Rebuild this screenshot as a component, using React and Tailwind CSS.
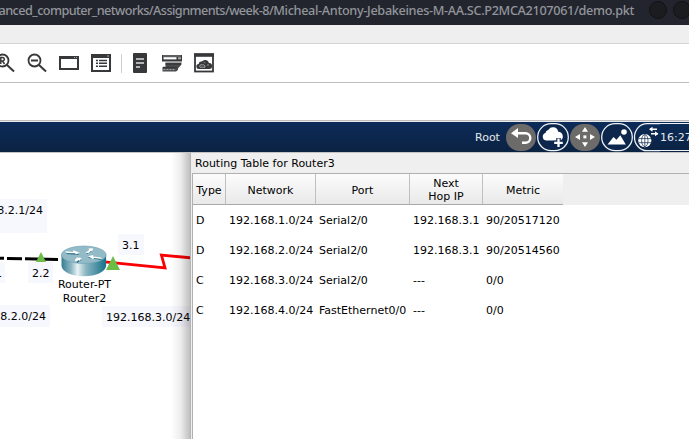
import React from "react";

const routes = [
  ["D", "192.168.1.0/24", "Serial2/0", "192.168.3.1", "90/20517120"],
  ["D", "192.168.2.0/24", "Serial2/0", "192.168.3.1", "90/20514560"],
  ["C", "192.168.3.0/24", "Serial2/0", "---", "0/0"],
  ["C", "192.168.4.0/24", "FastEthernet0/0", "---", "0/0"],
];

function TitleBar() {
  return (
    <div className="flex h-[25px] shrink-0 bg-[#23252e] text-[#92959b]">
      <div className="flex h-[20px] w-[634px] shrink-0 justify-end whitespace-nowrap font-['Noto_Sans',sans-serif] text-[12.7px] leading-[20px] font-medium tracking-[-0.34px]">
        <span className="tracking-[-0.58px]">anced_computer_networks/Assignments/week-8/</span>
        <span>Micheal-Antony-Jebakeines-M-AA.SC.P2MCA2107061/demo.pkt</span>
      </div>
      <div className="flex shrink-0 gap-[6px] pt-px pl-[15px]">
        <span className="h-[18px] w-[18px] rounded-full border border-[#121317] bg-[#1b1c20]" />
        <span className="h-[18px] w-[18px] rounded-full border border-[#121317] bg-[#1b1c20]" />
      </div>
    </div>
  );
}

function ToolBar() {
  return (
    <div className="h-[39px] shrink-0 border-b border-[#bdbdbd] bg-white">
      <svg width="689" height="38" viewBox="0 44 689 38" fill="none" stroke="#37383a">
        <circle cx="2.5" cy="60.5" r="6" strokeWidth="1.8" />
        <path d="M7 65l7 6.5" strokeWidth="2" />
        <path d="M.8 64v-6.5h1.7a1.8 1.8 0 010 3.6H.8M2.5 61l2 3" strokeWidth="1.5" />
        <circle cx="34.5" cy="60.5" r="6" strokeWidth="1.8" />
        <path d="M39 65l7 6.5" strokeWidth="2" />
        <path d="M31 60.5h7" strokeWidth="2" />
        <rect x="60" y="58" width="18" height="11" strokeWidth="2" />
        <path d="M59 57.5h20" strokeWidth="3" />
        <path d="M74 57.5h1M76 57.5h1" stroke="#aaa" strokeWidth="1" />
        <rect x="92" y="55" width="18" height="16" strokeWidth="2" />
        <path d="M91 56h20" strokeWidth="4" />
        <path d="M107 56h2" stroke="#aaa" strokeWidth="1" />
        <path d="M96 60.5h2M99 60.5h8M96 63.2h2M99 63.2h8M96 66.2h2M99 66.2h8" strokeWidth="1.6" />
        <path d="M121.5 54v19" stroke="#d0d0d0" />
        <rect x="133" y="53" width="14" height="20" rx="1" fill="#37383a" stroke="none" />
        <path d="M136 59h8M136 63h8M136 67h4" stroke="#ddd" strokeWidth="1.3" />
        <rect x="162" y="55" width="20" height="6.5" fill="#37383a" stroke="none" />
        <path d="M163.5 58.3h13" stroke="#fff" strokeWidth="2.2" />
        <path d="M178 58.3h3" stroke="#aaa" strokeWidth="2" />
        <path d="M163 56h18" stroke="#aaa" strokeWidth=".7" />
        <path d="M165.5 62.5h16v2l-3.5 4v1.5l-2 1.5h-13.5v-4.5h3z" fill="#4a4b4e" stroke="none" />
        <path d="M165.5 64h15.5M163 67.5h14" strokeWidth="1.6" />
        <path d="M163.5 69.6h12" stroke="#aaa" strokeDasharray="2 1" />
        <rect x="195" y="54.5" width="18" height="17" strokeWidth="1.8" />
        <path d="M194 55h20" strokeWidth="3.6" />
        <path d="M199 69a2.5 2.5 0 01-.3-5 2.8 2.8 0 013.2-2.4 4 4 0 017.1 1.4 3 3 0 01.2 6z" fill="#37383a" stroke="none" />
        <path d="M200 67.2a1.5 1.5 0 012-2.2 2 2 0 013 2.2zM204 62.2l1 1M207 65h2" stroke="#bbb" strokeWidth=".8" />
      </svg>
    </div>
  );
}

function NavBar() {
  return (
    <div className="relative flex h-[30px] shrink-0 bg-linear-to-b from-[#0c2b59] to-[#0b2342] text-[11px] leading-[31px] text-[#e4e8ee]">
      <span className="ml-[475px] w-[31px] shrink-0">Root</span>
      <svg className="shrink-0" width="154" height="30" viewBox="506 122 154 30" fill="none">
        <rect x="506" y="124" width="30" height="27" rx="13.5" fill="#6c6b69" />
        <path d="M517 133.2h8.5a4.6 4.6 0 010 9.6h-3.5" stroke="#fff" strokeWidth="2.4" />
        <path d="M511 133.2l7-5.2v10z" fill="#fff" />
        <rect x="537.7" y="123.7" width="30.6" height="27" rx="13.4" fill="#0c264c" stroke="#eef1f5" strokeWidth="1.3" />
        <path d="M546 140.5a3.8 3.8 0 01-.5-7.4 3.8 3.8 0 013-3.4 5.3 5.3 0 019.7 2 4.7 4.7 0 012.2 8.8z" fill="#fff" />
        <path d="M558.5 138v10M553.5 143h10" stroke="#0c264c" strokeWidth="4.5" />
        <path d="M558.5 138.5v8.5M554.2 142.8h8.6" stroke="#fff" strokeWidth="2.3" />
        <rect x="570" y="124" width="30" height="27" rx="13.5" fill="#6c6b69" />
        <path d="M585 127l3 4.8h-6zM585 147l3-4.8h-6zM575 137l5-3v6zM595 137l-5-3v6z" fill="#fff" />
        <rect x="583.4" y="135.4" width="3" height="3" fill="#fff" />
        <rect x="601.7" y="123.7" width="30.6" height="27" rx="13.4" fill="#0c264c" stroke="#eef1f5" strokeWidth="1.3" />
        <path d="M607.5 144.5l6-7.5 3 2.7 3.8-4.5 5.5 9.3z" fill="#fff" />
        <circle cx="624" cy="132" r="2.8" fill="#fff" />
        <path d="M660 123.7h-13a12.5 13.5 0 000 27h13" stroke="#eef1f5" strokeWidth="1.3" />
        <circle cx="644.8" cy="140.6" r="6.6" fill="#fff" />
        <path d="M644.8 134.5v12.4M639 138.6h12M639 142.7h12" stroke="#0c264c" strokeWidth=".7" />
        <ellipse cx="644.8" cy="140.6" rx="3.2" ry="6" stroke="#0c264c" strokeWidth=".7" />
        <path d="M650 129.2h7M651 133.8h7" stroke="#fff" strokeWidth="1.6" />
        <path d="M652.5 126.7v5l-3.5-2.5zM655 131.3v5l3.4-2.5z" fill="#fff" />
      </svg>
      <span className="h-[29px] grow overflow-hidden border-b border-[#eef1f5] whitespace-nowrap">16:27:00</span>
      <div className="absolute top-px left-[660px] h-px w-[29px] bg-[#eef1f5]" />
    </div>
  );
}

const label = "absolute whitespace-nowrap bg-[#f7f7fe]";

function Topology() {
  return (
    <div className="relative w-[190px] shrink-0 overflow-hidden border-t border-[#c4c4c4] bg-white text-[11px] leading-[13px]">
      <div className="absolute -top-px left-0 h-[290px] w-[190px]">
        <div className={`${label} top-[47px] left-0 h-[34px] w-[47px]`} />
        <div className="absolute top-[52px] right-[147px] whitespace-nowrap">192.168.2.1/24</div>
        <div className={`${label} top-[82px] left-[118px] h-[21px] w-[26px] pt-[5px] pl-[4px]`}>3.1</div>
        <div className={`${label} top-[110px] left-0 h-[21px] w-[5px]`} />
        <div className="absolute top-[115px] right-[188px]">2.1</div>
        <div className={`${label} top-[110px] left-[28px] h-[21px] w-[25px] pt-[5px] pl-[4px]`}>2.2</div>
        <div className={`${label} top-[153px] left-0 h-[22px] w-[50px]`} />
        <div className="absolute top-[158px] right-[144px] whitespace-nowrap">192.168.2.0/24</div>
        <div className={`${label} top-[154px] left-[102px] h-[21px] w-[90px] pt-[5px] pl-[4px]`}>192.168.3.0/24</div>
        <svg className="absolute top-0 left-0" width="190" height="180" viewBox="0 152 190 180" fill="none">
          <defs>
            <linearGradient id="routerSide">
              <stop offset="0" stopColor="#347d91" />
              <stop offset=".22" stopColor="#8fb8c4" />
              <stop offset=".36" stopColor="#e8f2f4" />
              <stop offset=".55" stopColor="#8bb5c2" />
              <stop offset="1" stopColor="#14718a" />
            </linearGradient>
          </defs>
          <path d="M0 258.2l4 .1M7 258.5l15 .2M25 258.7l33 .8" stroke="#000" strokeWidth="3" />
          <path d="M102 261.6l63 6.4-3.6-13 31 3" stroke="#fa0000" strokeWidth="2.8" />
          <path d="M61.5 255v10.5c0 6.2 10 10.7 22.3 10.7s22.3-4.5 22.3-10.7V255z" fill="url(#routerSide)" />
          <ellipse cx="83.8" cy="254.8" rx="22.3" ry="8.7" fill="#93bac7" stroke="#73a4b4" strokeWidth=".7" />
          <g stroke="#2f7287" strokeWidth="1.8" transform="translate(.6 1.2)">
            <path d="M66 252l12 1M86 252l5-3M88 256l13 2M76 261l4-3" />
          </g>
          <g fill="#fff">
            <path d="M65 251.3l8 .6.3-1.6 6.5 2.5-4 1.6-.5-1.1-8.6-.4z" />
            <path d="M85.3 252.7l4.2-3-1.4-1.2 5-.2-1 3-1-.5-2.6 2.2z" />
            <path d="M102 259l-8-1-.8 1.2-5.3-3 5.5-1.2-.4 1.4 8 1z" />
            <path d="M75 259.4l2.3-2 4.5.6-2.5 2.9-.7-.8-2.5 1.7-1.1-1.5z" />
          </g>
          <path d="M41 252l5 10H36zM113 256l7 14h-14z" fill="#6abd45" />
        </svg>
        <div className="absolute top-[126px] left-[44px] w-[81px] text-center leading-[14px]">Router-PT<br />Router2</div>
        <div className="absolute inset-y-0 right-0 w-[19px] bg-linear-to-r from-transparent via-black/7 to-black/25" />
      </div>
    </div>
  );
}

const head = "flex items-center justify-center border-r border-b border-r-[#bfbfbf] border-b-[#a8a8a8] bg-linear-to-b from-[#fcfcfc] to-[#e9e9e9] pt-[2px] text-center leading-[13px]";

function RoutingTable() {
  return (
    <div className="flex grow flex-col border-t border-l border-t-[#c4c4c4] border-l-[#b5b5b5] bg-[#efefef] pl-px text-[11px]">
      <div className="h-[20px] shrink-0 pl-[3px] leading-[22px]">Routing Table for Router3</div>
      <div className="flex grow flex-col border-t border-l border-[#b0b0b0] bg-white">
        <div className="grid h-[31px] shrink-0 grid-cols-[33px_90px_94px_73px_80px] bg-[#efefef]">
          <div className={head}>Type</div>
          <div className={head}>Network</div>
          <div className={head}>Port</div>
          <div className={head}>Next<br />Hop IP</div>
          <div className={`${head} border-r-0`}>Metric</div>
        </div>
        {routes.map((r) => (
          <div key={r[1]} className="grid h-[30px] shrink-0 grid-cols-[33px_90px_94px_73px_80px] leading-[31px]">
            {r.map((v, i) => (
              <div key={i} className="pl-[3px] whitespace-nowrap">{v}</div>
            ))}
          </div>
        ))}
      </div>
    </div>
  );
}

export default function App() {
  return (
    <div className="flex h-[439px] w-[689px] flex-col overflow-hidden bg-white font-['DejaVu_Sans',sans-serif] text-black">
      <TitleBar />
      <div className="h-[19px] shrink-0 border-b border-[#d5d5d5] bg-[#efefef]" />
      <ToolBar />
      <div className="h-[39px] shrink-0 border-b border-[#e9e9ec] bg-white">
        <div className="h-[38px] border-b border-[#bdbdbd]" />
      </div>
      <NavBar />
      <div className="flex grow">
        <Topology />
        <RoutingTable />
      </div>
    </div>
  );
}
